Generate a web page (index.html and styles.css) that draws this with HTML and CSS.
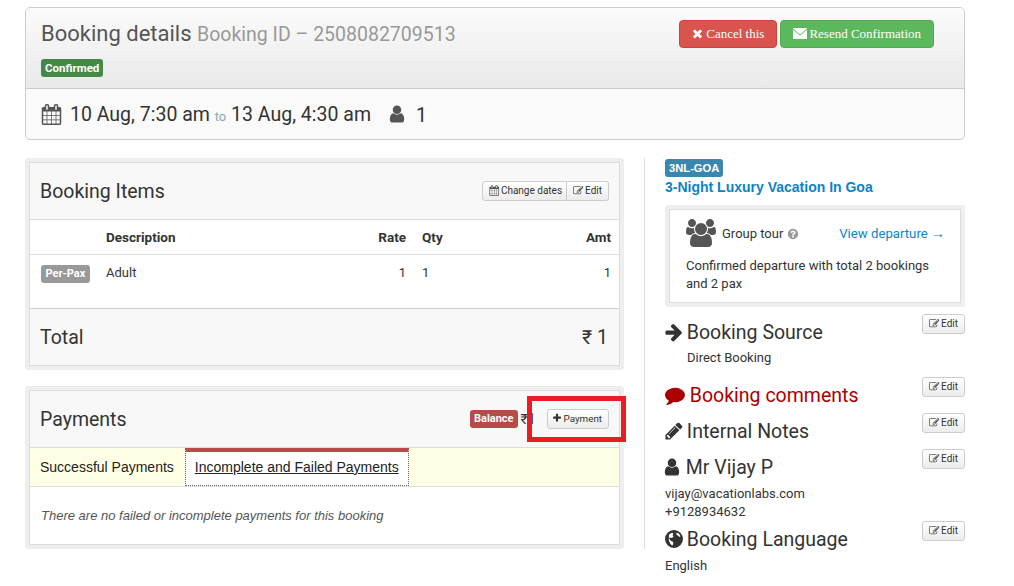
FILE: index.html
```html
<!DOCTYPE html>
<html lang="en">
<head>
<meta charset="utf-8">
<title>Booking details</title>
<link rel="stylesheet" href="styles.css">
</head>
<body>
<svg class="defs" width="0" height="0" aria-hidden="true">
  <symbol id="i-user" viewBox="0 0 1792 1792"><path d="M1536 1399q0 109-62.5 187t-150.5 78h-854q-88 0-150.5-78t-62.5-187q0-85 8.5-160.5t31.5-152 58.5-131 94-89 134.5-34.5q131 128 313 128t313-128q76 0 134.5 34.5t94 89 58.5 131 31.5 152 8.5 160.5zm-256-887q0 159-112.5 271.5t-271.5 112.5-271.5-112.5-112.5-271.5 112.5-271.5 271.5-112.5 271.5 112.5 112.5 271.5z"/></symbol>
  <symbol id="i-arrow" viewBox="0 0 1792 1792"><path d="M1600 960q0 54-37 91l-651 651q-39 37-91 37-51 0-90-37l-75-75q-38-38-38-91t38-91l293-293h-704q-52 0-84.5-37.5t-32.5-90.5v-128q0-53 32.5-90.5t84.5-37.5h704l-293-294q-38-36-38-90t38-90l75-75q38-38 90-38 53 0 91 38l651 651q37 35 37 90z"/></symbol>
  <symbol id="i-pencil" viewBox="0 0 1792 1792"><path d="M491 1536l91-91-235-235-91 91v107h128v128h107zm523-928q0-22-22-22-10 0-17 7l-542 542q-7 7-7 17 0 22 22 22 10 0 17-7l542-542q7-7 7-17zm-54-192l416 416-832 832h-416v-416zm683 96q0 53-37 90l-166 166-416-416 166-165q36-38 90-38 53 0 91 38l235 234q37 39 37 91z"/></symbol>
  <symbol id="i-comment" viewBox="0 0 1792 1792"><path d="M1792 896q0 174-120 321.5t-326 233-450 85.5q-70 0-145-8-198 175-460 242-49 14-114 22-17 2-30.5-9t-17.5-29v-1q-3-4-.5-12t2-10 4.5-9.5l6-9 7-8.5 8-9q7-8 31-34.5t34.5-38 31-39.5 32.5-51 27-59 26-76q-157-89-247.5-220t-90.5-281q0-130 71-248.5t191-204.5 286-136.5 348-50.5q244 0 450 85.5t326 233 120 321.5z"/></symbol>
  <symbol id="i-times" viewBox="0 0 1792 1792"><path d="M1490 1322q0 40-28 68l-136 136q-28 28-68 28t-68-28l-294-294-294 294q-28 28-68 28t-68-28l-136-136q-28-28-28-68t28-68l294-294-294-294q-28-28-28-68t28-68l136-136q28-28 68-28t68 28l294 294 294-294q28-28 68-28t68 28l136 136q28 28 28 68t-28 68l-294 294 294 294q28 28 28 68z"/></symbol>
  <symbol id="i-plus" viewBox="0 0 1792 1792"><path d="M1600 736v192q0 40-28 68t-68 28h-416v416q0 40-28 68t-68 28h-192q-40 0-68-28t-28-68v-416h-416q-40 0-68-28t-28-68v-192q0-40 28-68t68-28h416v-416q0-40 28-68t68-28h192q40 0 68 28t28 68v416h416q40 0 68 28t28 68z"/></symbol>
  <symbol id="i-cal" viewBox="0 0 1792 1792"><path d="M192 1664h288v-288h-288v288zm352 0h320v-288h-320v288zm-352-352h288v-320h-288v320zm352 0h320v-320h-320v320zm-352-384h288v-288h-288v288zm736 736h320v-288h-320v288zm-384-736h320v-288h-320v288zm768 736h288v-288h-288v288zm-384-352h320v-320h-320v320zm-352-864v-288q0-13-9.5-22.5t-22.5-9.5h-64q-13 0-22.5 9.5t-9.5 22.5v288q0 13 9.5 22.5t22.5 9.5h64q13 0 22.5-9.5t9.5-22.5zm736 864h288v-320h-288v320zm-384-384h320v-288h-320v288zm384 0h288v-288h-288v288zm32-480v-288q0-13-9.5-22.5t-22.5-9.5h-64q-13 0-22.5 9.5t-9.5 22.5v288q0 13 9.5 22.5t22.5 9.5h64q13 0 22.5-9.5t9.5-22.5zm384-64v1280q0 52-38 90t-90 38h-1408q-52 0-90-38t-38-90v-1280q0-52 38-90t90-38h128v-96q0-66 47-113t113-47h64q66 0 113 47t47 113v96h384v-96q0-66 47-113t113-47h64q66 0 113 47t47 113v96h128q52 0 90 38t38 90z"/></symbol>
  <symbol id="i-edit" viewBox="0 0 1792 1792"><path d="M888 1184l116-116-152-152-116 116v56h96v96h56zm440-720q-16-16-33 1l-350 350q-17 17-1 33t33-1l350-350q17-17 1-33zm80 594v190q0 119-84.5 203.5t-203.5 84.5h-832q-119 0-203.5-84.5t-84.5-203.5v-832q0-119 84.5-203.5t203.5-84.5h832q63 0 117 25 15 7 18 23 3 17-9 29l-49 49q-14 14-32 8-23-6-45-6h-832q-66 0-113 47t-47 113v832q0 66 47 113t113 47h832q66 0 113-47t47-113v-126q0-13 9-22l64-64q15-15 35-7t20 29zm-96-738l288 288-672 672h-288v-288zm444 132l-92 92-288-288 92-92q28-28 68-28t68 28l152 152q28 28 28 68t-28 68z"/></symbol>
  <symbol id="i-help" viewBox="0 0 1792 1792"><path d="M1024 1376v-192q0-14-9-23t-23-9h-192q-14 0-23 9t-9 23v192q0 14 9 23t23 9h192q14 0 23-9t9-23zm256-672q0-88-55.5-163t-138.5-116-170-41q-243 0-371 213-15 24 8 42l132 100q7 6 19 6 16 0 25-12 53-68 86-92 34-24 86-24 48 0 85.5 26t37.5 59q0 38-20 61t-68 45q-63 28-115.5 86.5t-52.5 125.5v36q0 14 9 23t23 9h192q14 0 23-9t9-23q0-19 21.5-49.5t54.5-49.5q32-18 49-28.5t46-35 44.5-48 28-60.5 12.5-81zm384 192q0 209-103 385.5t-279.5 279.5-385.5 103-385.5-103-279.5-279.5-103-385.5 103-385.5 279.5-279.5 385.5-103 385.5 103 279.5 279.5 103 385.5z"/></symbol>
  <symbol id="i-users" viewBox="0 0 1920 1792"><path d="M593 896q-162 5-265 128h-134q-82 0-138-40.5t-56-118.5q0-353 124-353 6 0 43.5 21t97.5 42.5 119 21.5q67 0 133-23-5 37-5 66 0 139 81 256zm1071 637q0 120-73 189.5t-194 69.5h-874q-121 0-194-69.5t-73-189.5q0-53 3.5-103.5t14-109 26.5-108.5 43-97.5 62-81 85.5-53.5 111.5-20q10 0 43 21.5t73 48 107 48 135 21.5 135-21.5 107-48 73-48 43-21.5q61 0 111.5 20t85.5 53.5 62 81 43 97.5 26.5 108.5 14 109 3.5 103.5zm-1024-1277q0 106-75 181t-181 75-181-75-75-181 75-181 181-75 181 75 75 181zm704 384q0 159-112.5 271.5t-271.5 112.5-271.5-112.5-112.5-271.5 112.5-271.5 271.5-112.5 271.5 112.5 112.5 271.5zm576 225q0 78-56 118.5t-138 40.5h-134q-103-123-265-128 81-117 81-256 0-29-5-66 66 23 133 23 59 0 119-21.5t97.5-42.5 43.5-21q124 0 124 353zm-128-609q0 106-75 181t-181 75-181-75-75-181 75-181 181-75 181 75 75 181z"/></symbol>
  <symbol id="i-globe" viewBox="0 0 18 18"><path fill-rule="evenodd" d="M9 0a9 9 0 1 0 0 18A9 9 0 0 0 9 0zM4 4.500l3-1.700 1.500.7L7.500 5l1 1.500L7 8 5 7.500 4 8.500 6 11l2 .7.3 2-1 2-2-2-1.500-3.500zM11.500 2.500l2.500 1.200 1.500 2.500-1 .8-1.500-1.500-1.500-.5z"/></symbol>
</svg>

<main class="page">
  <section class="summary">
    <header class="summary-head">
      <div>
        <h1 class="summary-title">Booking details <small>Booking ID – 2508082709513</small></h1>
        <span class="label label-green">Confirmed</span>
      </div>
      <div class="summary-actions">
        <a class="btn-main btn-red"><svg class="ico ico-times"><use href="#i-times"/></svg> Cancel this</a>
        <a class="btn-main btn-green"><svg class="env" viewBox="0 0 14 11"><rect width="14" height="11" fill="#fff"/><path d="M0 1l7 6 7-6" fill="none" stroke="#5cb85c" stroke-width="1"/></svg>Resend Confirmation</a>
      </div>
    </header>
    <div class="summary-dates">
      <svg class="ico ico-cal"><use href="#i-cal"/></svg>
      <span class="date-text">10 Aug, 7:30 am <small>to</small> 13 Aug, 4:30 am</span>
      <svg class="ico ico-pax"><use href="#i-user"/></svg>
      <span>1</span>
    </div>
  </section>

  <div class="columns">
    <div class="col-left">
      <section class="panel">
        <header class="panel-head">
          <h2>Booking Items</h2>
          <div class="btn-group">
            <a class="btn-sm"><svg class="ico ico-sm"><use href="#i-cal"/></svg> Change dates</a>
            <a class="btn-sm"><svg class="ico ico-sm"><use href="#i-edit"/></svg> Edit</a>
          </div>
        </header>
        <div class="items-row items-th">
          <span></span><span>Description</span><span class="num">Rate</span><span class="qty">Qty</span><span class="num">Amt</span>
        </div>
        <div class="items-row items-td">
          <span><span class="label label-grey">Per-Pax</span></span><span>Adult</span><span class="num">1</span><span class="qty">1</span><span class="num">1</span>
        </div>
        <footer class="panel-total"><h2>Total</h2><h2 class="total-val">₹ 1</h2></footer>
      </section>

      <section class="panel panel-pay">
        <header class="panel-head">
          <h2>Payments</h2>
          <div class="balance">
            <span class="label label-red">Balance</span>
            <span class="balance-val">₹ 1</span>
            <a class="btn-sm btn-solo btn-pay"><svg class="ico ico-plus"><use href="#i-plus"/></svg> Payment</a>
          </div>
        </header>
        <nav class="tabs">
          <a class="tab">Successful Payments</a>
          <a class="tab tab-active">Incomplete and Failed Payments</a>
          <span class="tab-fill"></span>
        </nav>
        <p class="pay-empty">There are no failed or incomplete payments for this booking</p>
      </section>
    </div>

    <aside class="col-right">
      <span class="label label-blue">3NL-GOA</span>
      <a class="trip-name">3-Night Luxury Vacation In Goa</a>
      <div class="group-box">
        <div class="group-top">
          <svg class="ico ico-users"><use href="#i-users"/></svg>
          <span class="group-name">Group tour <svg class="ico ico-help"><use href="#i-help"/></svg></span>
          <a class="depart">View departure <span class="depart-arrow">→</span></a>
        </div>
        <p class="group-text">Confirmed departure with total 2 bookings and 2 pax</p>
      </div>

      <div class="sec sec-source">
        <a class="btn-sm btn-solo btn-edit"><svg class="ico ico-sm"><use href="#i-edit"/></svg> Edit</a>
        <h3><svg class="ico ico-h ico-arrow"><use href="#i-arrow"/></svg> Booking Source</h3>
        <p class="sec-body sec-indent">Direct Booking</p>
      </div>
      <div class="sec">
        <a class="btn-sm btn-solo btn-edit"><svg class="ico ico-sm"><use href="#i-edit"/></svg> Edit</a>
        <h3 class="alert"><svg class="ico ico-h"><use href="#i-comment"/></svg> Booking comments</h3>
      </div>
      <div class="sec">
        <a class="btn-sm btn-solo btn-edit"><svg class="ico ico-sm"><use href="#i-edit"/></svg> Edit</a>
        <h3><svg class="ico ico-h ico-arrow"><use href="#i-pencil"/></svg> Internal Notes</h3>
      </div>
      <div class="sec sec-customer">
        <a class="btn-sm btn-solo btn-edit"><svg class="ico ico-sm"><use href="#i-edit"/></svg> Edit</a>
        <h3><svg class="ico ico-h ico-person"><use href="#i-user"/></svg> Mr Vijay P</h3>
        <p class="sec-body sec-contact">vijay@vacationlabs.com<br>+9128934632</p>
      </div>
      <div class="sec">
        <a class="btn-sm btn-solo btn-edit"><svg class="ico ico-sm"><use href="#i-edit"/></svg> Edit</a>
        <h3><svg class="ico ico-h ico-globe"><use href="#i-globe"/></svg> Booking Language</h3>
        <p class="sec-body sec-contact">English</p>
      </div>
    </aside>
  </div>

  <div class="annotation"></div>
</main>
</body>
</html>
```

FILE: styles.css
```css
* { box-sizing: border-box; }
html, body { margin: 0; height: 586px; overflow: hidden; background: #fff; }
body { font: 14px/18px Roboto, "Liberation Sans", sans-serif; color: #333; }
.defs { position: absolute; }
h1, h2, h3, p { margin: 0; font-weight: 400; }
a { cursor: pointer; }
.ico { display: inline-block; fill: currentColor; vertical-align: middle; }

.page { position: relative; padding: 7px 49px 0 25px; }

.summary { border: 1px solid #ccc; border-radius: 5px; height: 133px; background: #fafafa; overflow: hidden; }
.summary-head { height: 81px; display: flex; justify-content: space-between; padding: 12px 30px 0 15px; background: linear-gradient(#fbfbfb, #e9e9e9); border-bottom: 1px solid #ccc; }
.summary-title { font-size: 22px; line-height: 28px; color: #555; }
.summary-title small { font-size: 19.5px; color: #999; }
.label { display: inline-block; padding: 0 4px; height: 18px; font: 700 11px/18px Roboto, "Liberation Sans", sans-serif; color: #fff; border-radius: 3px; white-space: nowrap; }
.label-green { background: #468847; margin-top: 10px; font-size: 11.5px; }
.label-grey { background: #999; padding: 0 4.5px; }
.label-red { background: #b94a48; }
.label-blue { background: #3a87ad; }
.summary-actions { display: flex; gap: 3px; }
.btn-main { height: 28px; padding: 0 12px; border-radius: 4px; font: 13px/26px "Liberation Serif", serif; color: #fff; border: 1px solid; white-space: nowrap; }
.btn-red { background: #d9534f; border-color: #d43f3a; }
.btn-green { background: #5cb85c; border-color: #4cae4c; }
.ico-times { width: 13px; height: 13px; margin-left: -1px; margin-right: -1px; vertical-align: -2px; }
.env { width: 14px; height: 11px; margin-right: 2px; vertical-align: -1px; }
.summary-dates { display: flex; align-items: center; height: 50px; padding-left: 15px; font-size: 19.5px; color: #333; }
.summary-dates > span { padding-top: 4px; }
.summary-dates small { font-size: 13px; color: #8aa; }
.ico-cal { width: 21px; height: 21px; color: #555; margin-right: 8px; }
.ico-pax { width: 20px; height: 20px; color: #555; margin: 0 9px 0 16px; }

.columns { display: flex; margin-top: 18px; }
.col-left { width: 620px; padding-right: 20px; border-right: 1px solid #ddd; height: 391px; }
.col-right { width: 300px; margin-left: 20px; padding-top: 1px; }

.panel { border: 4px solid #eee; border-radius: 3px; background: #f8f8f8; outline: 1px solid #ddd; outline-offset: -5px; padding: 1px; height: 212px; }
.panel-pay { margin-top: 16px; height: 163px; }
.panel-head { display: flex; justify-content: space-between; align-items: center; height: 57px; padding: 0 10px; border-bottom: 1px solid #ddd; }
.panel h2 { font-size: 19.5px; line-height: 28px; padding-top: 2px; color: #333; }
.btn-group { display: flex; }
.btn-sm { display: inline-block; height: 20px; padding: 0 6px; font-size: 10px; line-height: 18px; color: #333; background: linear-gradient(#fff, #ececec); border: 1px solid #ccc; white-space: nowrap; }
.btn-group .btn-sm:first-child { border-radius: 3px 0 0 3px; padding-right: 4px; }
.btn-group .btn-sm:last-child { border-radius: 0 3px 3px 0; border-left: 0; }
.btn-solo { border-radius: 3px; }
.btn-pay { font-size: 9.8px; }
.ico-sm { width: 10.5px; height: 11px; margin-right: -1px; color: #555; vertical-align: -2px; }
.ico-plus { width: 10px; height: 10px; margin: 0 -1px 0 -1.5px; vertical-align: -1px; }

.items-row { display: grid; grid-template-columns: 76px 230px 70px 1fr auto; padding-right: 8px; background: #fff; }
.items-row .num { text-align: right; }
.items-row .qty { margin-left: 16px; }
.items-row > span:first-child { padding-left: 11px; }
.items-th { height: 35px; font-weight: 700; font-size: 13.5px; line-height: 35px; border-bottom: 1px solid #ddd; }
.items-td { height: 54px; padding-top: 9px; font-size: 13px; border-bottom: 1px solid #ccc; }
.panel-total { display: flex; justify-content: space-between; align-items: center; height: 56px; padding: 0 11px 0 10px; }
.total-val { color: #333; }

.balance { display: flex; align-items: center; }
.balance-val { font-size: 14px; margin: 0 11px 0 3px; word-spacing: -3.5px; }
.tabs { display: flex; height: 39px; background: #ffffe6; border-bottom: 1px solid #ddd; font: 14px/38px "Liberation Sans", sans-serif; color: #222; }
.tab { padding: 0 11px 0 10px; border-top: 4px solid transparent; line-height: 30px; }
.tab-active { background: #fff; border-top-color: #b94a48; border-left: 1px dotted #666; border-right: 1px dotted #666; border-bottom: 1px dotted #666; text-decoration: underline; height: 38px; padding: 0 9px; }
.tab-fill { flex: 1; }
.pay-empty { background: #fff; height: 58px; padding: 20px 11px 0; font: italic 13px/18px "Liberation Sans", sans-serif; color: #555; }

.label-blue { display: block; width: 58px; font: 700 11.2px/18px "Liberation Sans", sans-serif; }
.trip-name { display: block; margin-top: 1px; font: 700 14px/18px "Liberation Sans", sans-serif; color: #0d83c9; }
.group-box { margin-top: 9px; height: 102px; width: 300px; border: 4px solid #eee; outline: 1px solid #ddd; outline-offset: -5px; background: #fff; padding: 10px 16px 0 17px; border-radius: 3px; }
.group-top { display: flex; align-items: center; height: 28px; }
.ico-users { width: 30px; height: 28px; color: #555; margin-right: 6px; }
.group-name { flex: 1; font-size: 13px; padding-top: 2px; }
.ico-help { width: 12px; height: 12px; color: #999; vertical-align: -2px; }
.depart { color: #0d83c9; font-size: 13.2px; white-space: nowrap; }
.depart-arrow { font: 14px/18px "Liberation Sans", sans-serif; }
.group-text { margin-top: 10px; font-size: 13px; line-height: 18px; }

.sec { padding-bottom: 6px; }
.sec-source { margin-top: 7px; padding-bottom: 10px; }
.sec-customer { padding-bottom: 0; }
.sec h3 { font-size: 19.5px; line-height: 24px; padding-top: 7px; margin-bottom: -1px; color: #333; }
.sec h3.alert { color: #a00; }
.btn-edit { float: right; }
.sec-body { margin-top: 5px; font-size: 13px; line-height: 18px; }
.sec-contact { margin-top: 6px; }
.sec-indent { padding-left: 22px; }
.ico-h { width: 20px; height: 20px; vertical-align: -3px; }
.ico-arrow { margin-left: -1px; margin-right: -2px; }
.ico-person { margin-left: -3px; margin-right: -1px; }
.ico-globe { width: 18px; height: 18px; margin-right: -1px; vertical-align: -2px; }

.annotation { position: absolute; left: 527px; top: 396px; width: 99px; height: 46px; border: 5px solid #ed1c24; }
```
